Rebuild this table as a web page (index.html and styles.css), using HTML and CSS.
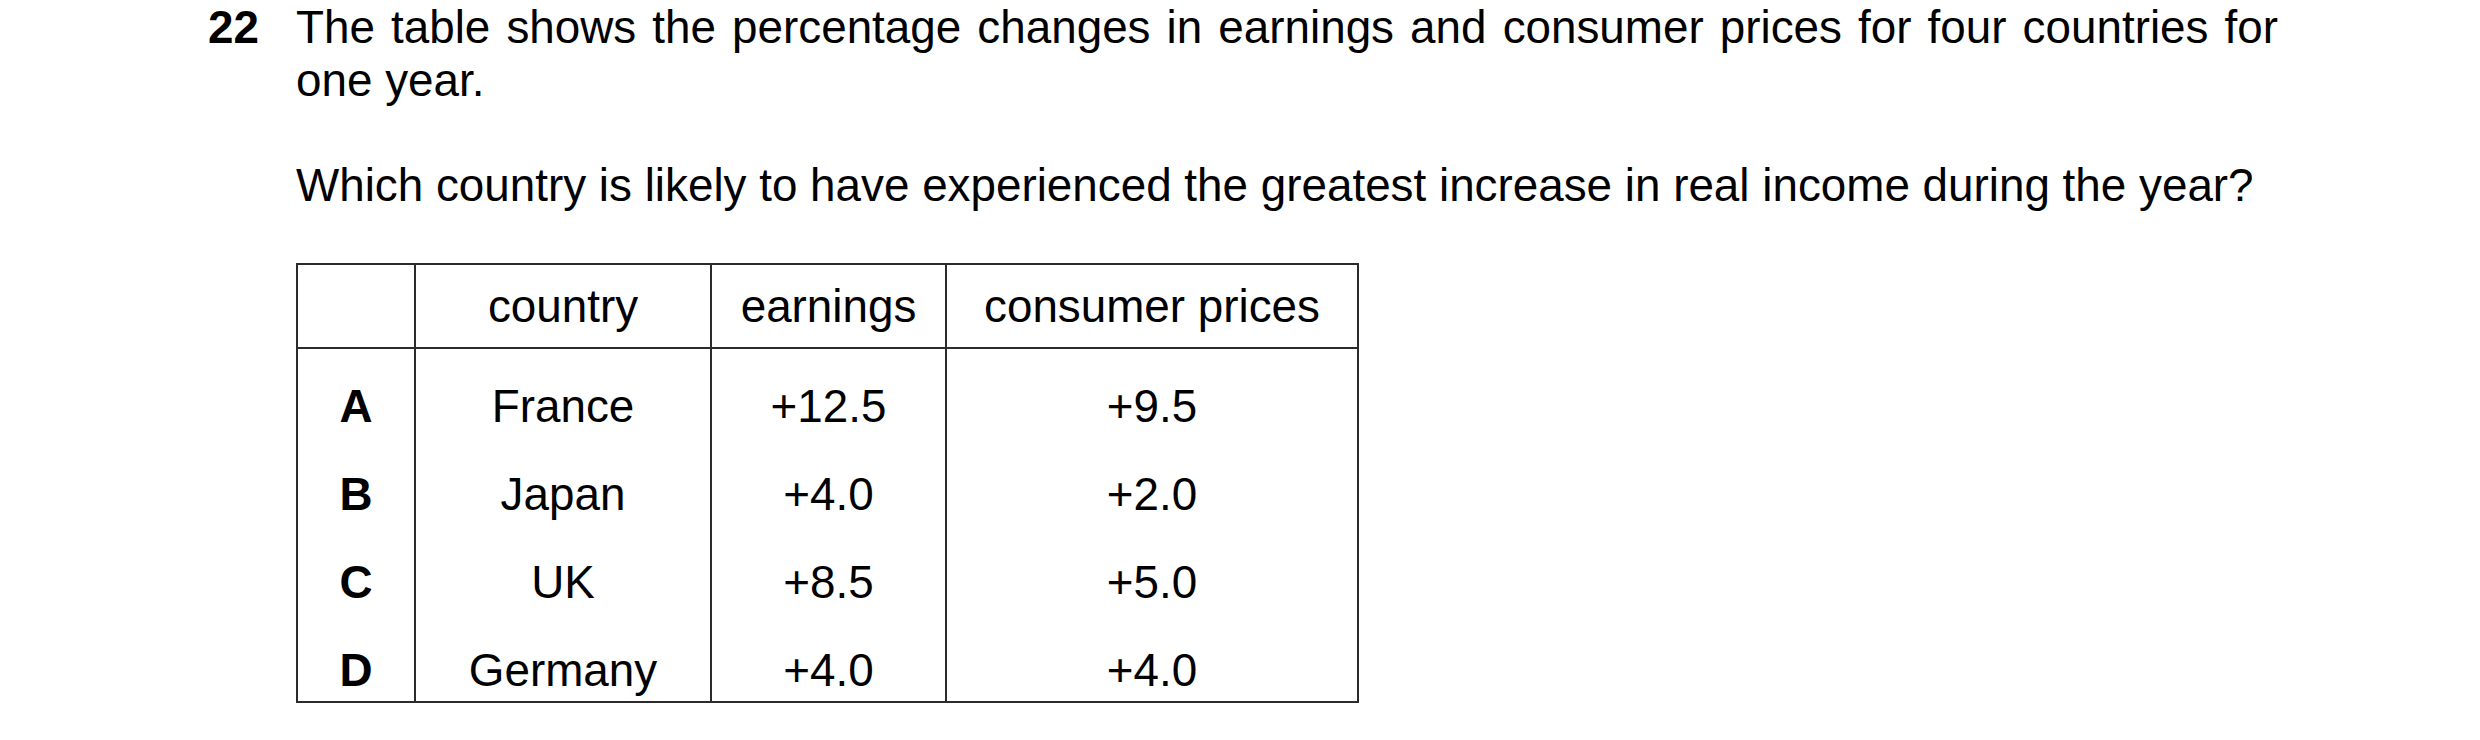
FILE: index.html
```html
<!DOCTYPE html>
<html>
<head>
<meta charset="utf-8">
<link rel="stylesheet" href="styles.css">
</head>
<body>
<div class="question">
  <div class="qnum">22</div>
  <div class="qbody">
    <p class="stem">The table shows the percentage changes in earnings and consumer prices for four countries for one year.</p>
    <p class="ask">Which country is likely to have experienced the greatest increase in real income during the year?</p>
    <table class="data">
      <thead>
        <tr>
          <th class="c-key"></th>
          <th class="c-country">country</th>
          <th class="c-earn">earnings</th>
          <th class="c-price">consumer prices</th>
        </tr>
      </thead>
      <tbody>
        <tr><td class="key">A</td><td>France</td><td>+12.5</td><td>+9.5</td></tr>
        <tr><td class="key">B</td><td>Japan</td><td>+4.0</td><td>+2.0</td></tr>
        <tr><td class="key">C</td><td>UK</td><td>+8.5</td><td>+5.0</td></tr>
        <tr><td class="key">D</td><td>Germany</td><td>+4.0</td><td>+4.0</td></tr>
      </tbody>
    </table>
  </div>
</div>
</body>
</html>
```

FILE: styles.css
```css
html, body {
  margin: 0;
  padding: 0;
  background: #ffffff;
}

body {
  font-family: "Liberation Sans", Arial, sans-serif;
  color: #000000;
  font-size: 45.8px;
  line-height: 53px;
}

.question {
  display: flex;
  padding-left: 208px;
  padding-top: 1px;
}

.qnum {
  width: 88px;
  flex: none;
  font-weight: bold;
}

.qbody {
  width: 1982px;
  flex: none;
}

.stem {
  margin: 0;
  text-align: justify;
}

.ask {
  margin: 52px 0 0 0;
}

.data {
  margin-top: 51px;
  border-collapse: collapse;
  table-layout: fixed;
  width: 1063px;
}

.data th,
.data td {
  border: 2px solid #2b2b2b;
  text-align: center;
  font-weight: normal;
  padding: 0;
}

.data thead th {
  height: 82px;
  vertical-align: middle;
}

.data tbody td {
  border-top: none;
  border-bottom: none;
  height: 52px;
  padding-top: 31px;
  padding-bottom: 4px;
  vertical-align: top;
}

.data tbody tr:last-child td {
  border-bottom: 2px solid #2b2b2b;
}

.c-key { width: 116px; }
.c-country { width: 294px; }
.c-earn { width: 233px; }
.c-price { width: auto; }

.data td.key {
  font-weight: bold;
}
```
